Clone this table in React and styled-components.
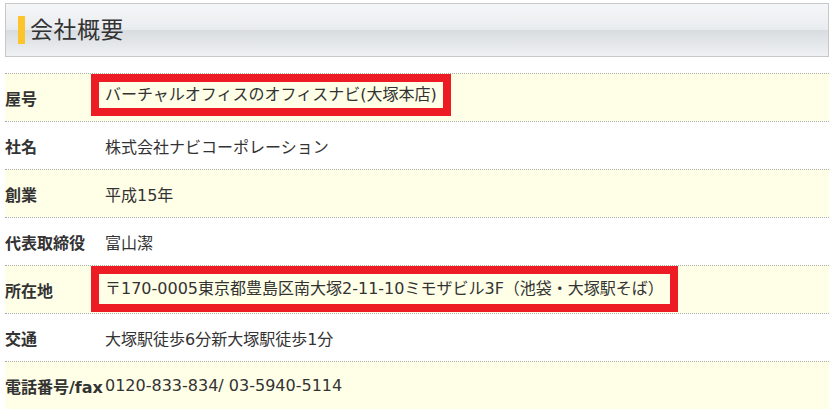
import React from "react";
import styled, { createGlobalStyle } from "styled-components";

const rows = [
  { label: "屋号", value: "バーチャルオフィスのオフィスナビ(大塚本店)", marked: true },
  { label: "社名", value: "株式会社ナビコーポレーション" },
  { label: "創業", value: "平成15年" },
  { label: "代表取締役", value: "富山潔" },
  {
    label: "所在地",
    value: "〒170-0005東京都豊島区南大塚2-11-10ミモザビル3F（池袋・大塚駅そば）",
    marked: true,
    tall: true,
  },
  { label: "交通", value: "大塚駅徒歩6分新大塚駅徒歩1分" },
  { label: "電話番号/fax", value: "0120-833-834/ 03-5940-5114" },
];

const App = () => {
  return (
    <Page>
      <GlobalStyle />
      <Header>
        <Accent />
        <Title>会社概要</Title>
      </Header>
      <Table>
        {rows.map((row, i) => (
          <Row key={row.label} $shaded={i % 2 === 0}>
            <Label>{row.label}</Label>
            {row.marked ? (
              <Marked $tall={row.tall}>{row.value}</Marked>
            ) : (
              <Value>{row.value}</Value>
            )}
          </Row>
        ))}
      </Table>
    </Page>
  );
};

export default App;

const GlobalStyle = createGlobalStyle`
  body {
    margin: 0;
    background: #fff;
    font-family: "DejaVu Sans", "Noto Sans CJK JP", sans-serif;
    color: #333;
  }
`;

const Page = styled.div`
  padding: 3px 3px 0 5px;
`;

const Header = styled.div`
  height: 52px;
  border: 1px solid #c8c8c8;
  background: linear-gradient(
    to bottom,
    #f5f6f8 0%,
    #e9ecef 49%,
    #d8dce0 50%,
    #eff1f3 100%
  );
  display: flex;
  align-items: center;
  padding-left: 12px;
  gap: 5px;
`;

const Accent = styled.div`
  width: 7px;
  height: 28px;
  background: #fdc42b;
`;

const Title = styled.div`
  font-size: 23px;
  line-height: 28px;
  color: #333;
  letter-spacing: 0.5px;
`;

const Table = styled.div`
  margin-top: 16px;
  display: flex;
  flex-direction: column;
`;

const Row = styled.div`
  height: 47px;
  border-top: 1px dotted #aaa;
  background: ${(p) => (p.$shaded ? "#ffffe8" : "#fff")};
  display: grid;
  grid-template-columns: minmax(100px, max-content) 1fr;
  align-items: center;
  font-size: 16px;
`;

const Label = styled.div`
  font-weight: bold;
  white-space: nowrap;
  color: #333;
`;

const Value = styled.div`
  color: #333;
  white-space: nowrap;
`;

const Marked = styled.div`
  justify-self: start;
  align-self: start;
  margin-left: -14px;
  border: 8px solid #ed1c24;
  padding: 0 6px;
  height: ${(p) => (p.$tall ? "30px" : "26px")};
  line-height: ${(p) => (p.$tall ? "30px" : "26px")};
  white-space: nowrap;
  color: #333;
`;
